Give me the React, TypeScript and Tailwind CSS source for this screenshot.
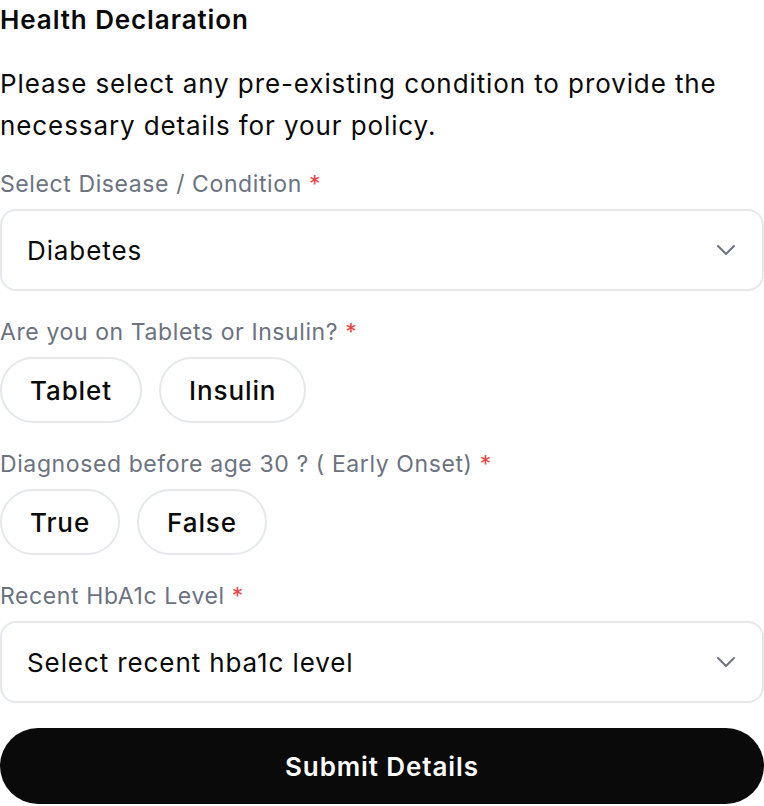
import { ChevronDown } from "lucide-react";

interface Field {
  label: string;
}

function Label({ label }: Field) {
  return (
    <label className="text-[23px] leading-[30px] tracking-[0.6px] text-[#6b7280]">
      {label} <span className="text-[#ef4444]">*</span>
    </label>
  );
}

function SelectBox({ value }: { value: string }) {
  return (
    <div className="flex h-[82px] items-center justify-between rounded-2xl border-2 border-[#e5e7eb] bg-white pl-[25px] pr-[20px]">
      <span className="text-[26px] tracking-[0.9px] text-[#0a0a0a]">{value}</span>
      <ChevronDown size={32} strokeWidth={1.5} className="text-[#6b7280]" />
    </div>
  );
}

function Pills({ options }: { options: string[] }) {
  return (
    <div className="flex gap-[17px]">
      {options.map((o) => (
        <button
          key={o}
          className="h-[66px] rounded-full border-2 border-[#e5e7eb] bg-white px-[28px] text-[26px] font-medium tracking-[0.9px] text-[#0a0a0a]"
        >
          {o}
        </button>
      ))}
    </div>
  );
}

export default function App() {
  return (
    <div className="w-[764px] bg-white font-['Inter',sans-serif]">
      <h2 className="text-[26px] leading-[40px] font-semibold tracking-[0.9px] text-[#0a0a0a]">Health Declaration</h2>
      <p className="mt-[23px] text-[26px] leading-[42px] tracking-[0.9px] text-[#0a0a0a]">
        Please select any pre-existing condition to provide the necessary details for your policy.
      </p>

      <div className="mt-[22px] flex flex-col gap-[26px]">
        <div className="flex flex-col gap-[10px]">
          <Label label="Select Disease / Condition" />
          <SelectBox value="Diabetes" />
        </div>
        <div className="flex flex-col gap-[10px]">
          <Label label="Are you on Tablets or Insulin?" />
          <Pills options={["Tablet", "Insulin"]} />
        </div>
        <div className="flex flex-col gap-[10px]">
          <Label label="Diagnosed before age 30 ? ( Early Onset)" />
          <Pills options={["True", "False"]} />
        </div>
        <div className="flex flex-col gap-[10px]">
          <Label label="Recent HbA1c Level" />
          <SelectBox value="Select recent hba1c level" />
        </div>
      </div>

      <button className="mt-[25px] h-[76px] w-full rounded-full bg-[#0a0a0a] text-[26px] font-semibold tracking-[0.9px] text-white">
        Submit Details
      </button>
    </div>
  );
}
